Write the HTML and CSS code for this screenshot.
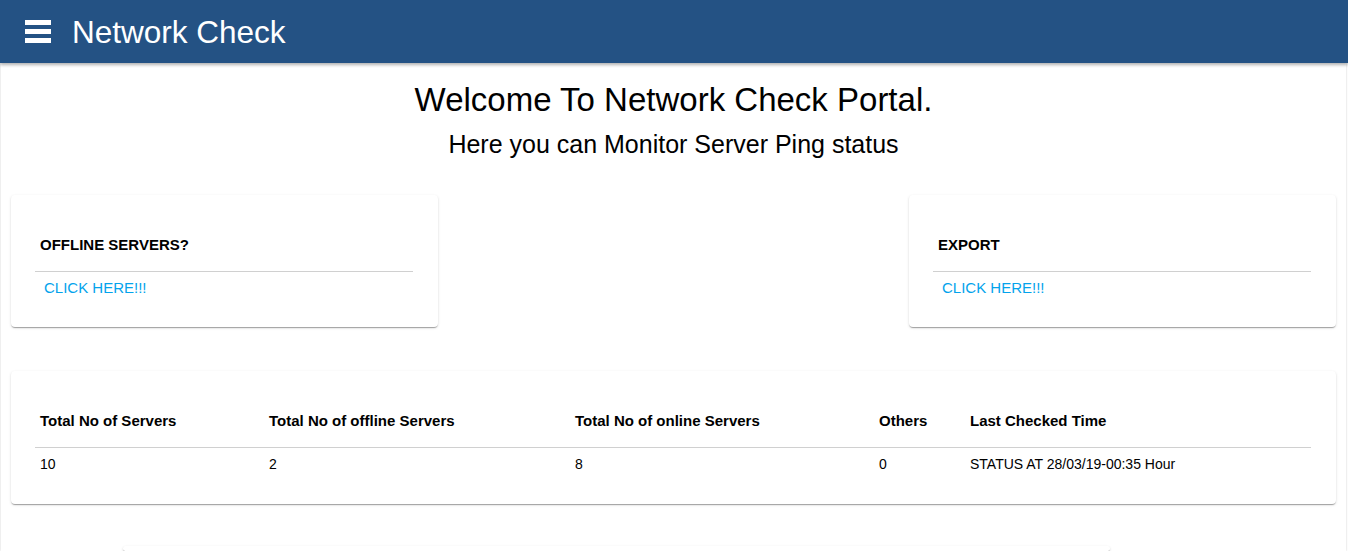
FILE: index.html
```html
<!DOCTYPE html>
<html lang="en">
<head>
<meta charset="utf-8">
<title>Network Check</title>
<link rel="stylesheet" href="styles.css">
</head>
<body>
<header class="topbar">
  <span class="menu-icon" aria-label="menu"><i></i><i></i><i></i></span>
  <span class="brand">Network Check</span>
</header>
<main class="page">
  <h1 class="welcome">Welcome To Network Check Portal.</h1>
  <p class="subtitle">Here you can Monitor Server Ping status</p>

  <section class="card-row">
    <div class="card small-card">
      <div class="card-title">OFFLINE SERVERS?</div>
      <div class="card-link"><a href="#">CLICK HERE!!!</a></div>
    </div>
    <div class="card small-card">
      <div class="card-title">EXPORT</div>
      <div class="card-link"><a href="#">CLICK HERE!!!</a></div>
    </div>
  </section>

  <section class="card table-card">
    <table class="stats">
      <colgroup>
        <col class="c1"><col class="c2"><col class="c3"><col class="c4"><col class="c5">
      </colgroup>
      <thead>
        <tr>
          <th>Total No of Servers</th>
          <th>Total No of offline Servers</th>
          <th>Total No of online Servers</th>
          <th>Others</th>
          <th>Last Checked Time</th>
        </tr>
      </thead>
      <tbody>
        <tr>
          <td>10</td>
          <td>2</td>
          <td>8</td>
          <td>0</td>
          <td>STATUS AT 28/03/19-00:35 Hour</td>
        </tr>
      </tbody>
    </table>
  </section>

  <section class="card bottom-card"></section>
</main>
</body>
</html>
```

FILE: styles.css
```css
html, body {
  margin: 0;
  padding: 0;
  background: #ffffff;
  font-family: "Liberation Sans", Arial, sans-serif;
  color: #000;
  overflow: hidden;
}

.topbar {
  position: relative;
  z-index: 2;
  height: 63px;
  background: #245284;
  display: flex;
  align-items: center;
  padding-left: 25px;
  box-shadow: 0 2px 3px rgba(0, 0, 0, 0.3);
}

.menu-icon {
  display: flex;
  flex-direction: column;
  gap: 4px;
  width: 26px;
  margin-right: 21px;
}

.menu-icon i {
  display: block;
  height: 5px;
  background: #ffffff;
}

.brand {
  color: #ffffff;
  font-size: 31.5px;
  line-height: 40px;
}

.page {
  margin: 0 2px 0 1px;
  padding: 17px 10px 0 10px;
  box-shadow: 0 0 2px rgba(0, 0, 0, 0.2);
}

.welcome {
  margin: 0;
  text-align: center;
  font-size: 33px;
  line-height: 40px;
  font-weight: normal;
}

.subtitle {
  margin: 9px 0 0 0;
  text-align: center;
  font-size: 25px;
  line-height: 30px;
}

.card {
  background: #fff;
  border-radius: 4px;
  box-shadow: 0 2px 1px -1px rgba(0, 0, 0, 0.2),
              0 1px 1px 0 rgba(0, 0, 0, 0.14),
              0 1px 3px 0 rgba(0, 0, 0, 0.12);
}

.card-row {
  margin-top: 36px;
  display: flex;
  justify-content: space-between;
}

.small-card {
  width: 427px;
  box-sizing: border-box;
  padding: 28px 25px 22px 24px;
}

.card-title {
  font-size: 15px;
  font-weight: bold;
  line-height: 20px;
  padding: 12px 5px 16px 5px;
  border-bottom: 1px solid #d0d0d0;
}

.card-link {
  font-size: 15px;
  line-height: 20px;
  padding: 6px 9px 7px 9px;
}

.card-link a {
  color: #03a3ec;
  text-decoration: none;
}

.table-card {
  margin-top: 44px;
  padding: 28px 25px 23px 24px;
}

.stats {
  width: 100%;
  border-collapse: collapse;
  table-layout: fixed;
}

.stats col.c1 { width: 229px; }
.stats col.c2 { width: 306px; }
.stats col.c3 { width: 304px; }
.stats col.c4 { width: 91px; }

.stats th {
  text-align: left;
  font-size: 15px;
  font-weight: bold;
  line-height: 20px;
  padding: 12px 5px 16px 5px;
  border-bottom: 1px solid #d0d0d0;
}

.stats td {
  font-size: 14px;
  line-height: 20px;
  padding: 6px 5px 7px 5px;
}

.bottom-card {
  margin: 42px 0 0 112px;
  width: 987px;
  height: 5px;
}
```
